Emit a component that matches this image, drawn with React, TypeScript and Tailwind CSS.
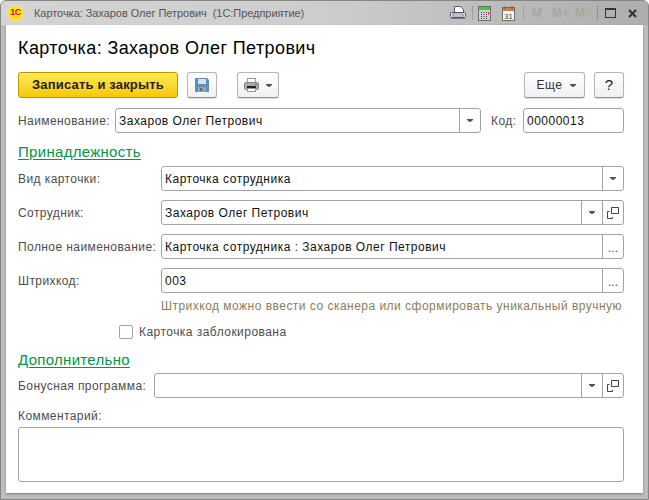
import React from 'react';

const font = { fontFamily: '"Liberation Sans", Arial, sans-serif' };

const Caret = () => (
  <svg width="6" height="3" viewBox="0 0 6 3" className="shrink-0">
    <path d="M0 0h6v1L3.500 3h-1L0 1z" fill="#555" />
  </svg>
);

const CopyIcon = () => (
  <svg width="12" height="12" viewBox="0 0 12 12" fill="none" stroke="#444" strokeWidth="1">
    <path d="M4.500 .5h7v6h-7z" />
    <path d="M2.500 4.500h-2v7h5V10" />
  </svg>
);

const FieldBtn = ({ w, children }: { w: string; children: React.ReactNode }) => (
  <div className={`${w} h-full border-l border-[#a3a3a3] flex items-center justify-center shrink-0`}>{children}</div>
);

const Dots = () => <span className="text-[12px] leading-none text-[#444] mt-[3px]">...</span>;

const Field = ({ value, className, children }: { value?: string; className: string; children?: React.ReactNode }) => (
  <div className={`h-[25px] border border-[#a3a3a3] rounded-[3px] bg-white flex items-stretch ${className}`}>
    <div className="flex-1 min-w-0 px-[3px] flex items-center text-[12px] tracking-[0.5px] text-[#111] whitespace-nowrap">{value}</div>
    {children}
  </div>
);

const Label = ({ children, className }: { children: React.ReactNode; className: string }) => (
  <div className={`text-[12px] tracking-[0.42px] text-[#4d4d4d] whitespace-nowrap shrink-0 ${className}`}>{children}</div>
);

const Row = ({ label, value, children }: { label: string; value?: string; children?: React.ReactNode }) => (
  <div className="flex items-center">
    <Label className="w-[143px]">{label}</Label>
    <Field value={value} className="flex-1">{children}</Field>
  </div>
);

const ToolBtn = ({ className, children }: { className: string; children: React.ReactNode }) => (
  <div className={`h-[26px] rounded-[3px] border border-[#b5b5b5] border-b-[#8f8f8f] bg-gradient-to-b from-white to-[#f1f1f1] shadow-[0_1px_1px_rgba(0,0,0,0.15)] flex items-center justify-center ${className}`}>
    {children}
  </div>
);

const Heading = ({ children }: { children: React.ReactNode }) => (
  <div className="text-[15px] leading-[18px] tracking-[0.3px] text-[#009646] underline underline-offset-2 decoration-[#009646]">{children}</div>
);

export default function App() {
  return (
    <div style={font} className="w-[649px] h-[500px] overflow-hidden flex flex-col bg-[#bdbdbd] border border-[#858585] rounded-t-[6px]">
      {/* title bar */}
      <div className="h-[24px] shrink-0 flex items-center pl-[7px] pr-[11px] bg-gradient-to-r from-[#d4d4d4] via-[#cdcdcd] to-[#adadad]">
        <div className="w-[15px] h-[15px] rounded-full bg-[#ffdf1f] shadow-[0_0_2px_#fff3a0] flex items-center justify-center text-[9px] font-bold tracking-[-0.5px] text-[#d0201a] shrink-0">1С</div>
        <div className="ml-[11px] text-[11px] tracking-[-0.05px] text-[#555] whitespace-pre">Карточка: Захаров Олег Петрович  (1С:Предприятие)</div>
        <div className="ml-auto flex items-center">
          <svg width="16" height="14" viewBox="0 0 16 14" fill="none">
            <path d="M4.500 .5h6l3 3v3h-9z" fill="#fff" stroke="#556" />
            <rect x=".5" y="6.500" width="15" height="5" rx="1" fill="#e4e8ee" stroke="#556" />
            <rect x="3" y="8" width="10" height="2" fill="#fff" stroke="#556" strokeWidth=".7" />
            <path d="M1 12.500h14" stroke="#778" />
          </svg>
          <div className="w-px h-[14px] bg-[#9c9c9c] ml-[6px] mr-[5px]" />
          <svg width="13" height="15" viewBox="0 0 13 15">
            <rect x=".5" y=".5" width="12" height="14" fill="#cfd2d2" stroke="#6d6d6d" />
            <rect x="1" y="1" width="11" height="3" fill="#4fc048" />
            <path d="M3 6h1v1H3zM5.500 6h1v1h-1zM8 6h1v1H8zM3 8h1v1H3zM5.500 8h1v1h-1zM8 8h1v1H8zM3 10h1v1H3zM5.500 10h1v1h-1zM8 10h1v1H8zM3 12h1v1H3zM5.500 12h1v1h-1zM8 12h1v1H8z" fill="#444" />
            <rect x="10" y="6" width="1" height="3" fill="#d33" />
          </svg>
          <svg width="13" height="15" viewBox="0 0 13 15" className="ml-[11px]">
            <rect x=".5" y="1.500" width="12" height="13" fill="#f6f6f6" stroke="#7a6a5a" />
            <rect x="1" y="2" width="11" height="3" fill="#c9824a" />
            <path d="M3 0v3M10 0v3" stroke="#8a5a3a" />
            <text x="6.500" y="12.500" fontSize="7.500" textAnchor="middle" fill="#333">31</text>
          </svg>
          <div className="w-px h-[14px] bg-[#9f9f9f] ml-[8px] mr-[8px]" />
          <div className="flex items-center text-[12px] font-bold text-[#aea49b]">
            <span className="w-[20px]">M</span>
            <span className="w-[23px]">M+</span>
            <span className="w-[21px]">M-</span>
          </div>
          <div className="w-px h-[14px] bg-[#8f8f8f] ml-[1px] mr-[7px]" />
          <div className="w-[11px] h-[10px] border border-[#333] border-t-2 mr-[12px]" />
          <svg width="9" height="9" viewBox="0 0 9 9">
            <path d="M1 1l7 7M8 1L1 8" stroke="#333" strokeWidth="2" />
          </svg>
        </div>
      </div>

      {/* form */}
      <div className="mx-[5px] h-[468px] bg-white pl-[12px] pr-[19px] flex flex-col shadow-[0_1px_2px_rgba(0,0,0,0.35)] shrink-0">
        <div className="mt-[13px] text-[18px] leading-[20px] tracking-[0.4px] text-black whitespace-nowrap">Карточка: Захаров Олег Петрович</div>

        <div className="mt-[14px] flex items-center">
          <div className="w-[160px] h-[26px] rounded-[3px] border border-[#b8960b] bg-gradient-to-b from-[#ffe94a] to-[#f5c800] flex items-center justify-center text-[13px] font-bold tracking-[0.17px] text-[#222]">
            Записать и закрыть
          </div>
          <ToolBtn className="w-[30px] ml-[9px]">
            <svg width="14" height="14" viewBox="0 0 14 14">
              <path d="M0 0h12l2 2v12H0z" fill="#5f8fb8" />
              <rect x="3" y="1" width="8" height="5" fill="#d5e4f2" />
              <rect x="3" y="9" width="8" height="5" fill="#93a3b3" />
              <rect x="5" y="10" width="2" height="3" fill="#3f6f98" />
            </svg>
          </ToolBtn>
          <ToolBtn className="w-[42px] ml-[20px] gap-[7px]">
            <svg width="15" height="14" viewBox="0 0 15 14">
              <rect x="3.500" y=".5" width="8" height="4" fill="#fff" stroke="#999" />
              <rect x=".5" y="4.500" width="14" height="7" rx="1" fill="#b5a8a0" stroke="#888" />
              <rect x="3" y="8" width="9" height="2" fill="#222" />
              <rect x="11" y="6" width="2" height="1" fill="#c0392b" />
              <rect x="3.500" y="10.500" width="8" height="3" fill="#fff" stroke="#999" />
            </svg>
            <Caret />
          </ToolBtn>
          <ToolBtn className="w-[61px] ml-auto gap-[7px] pl-[3px] text-[12px] tracking-[0.6px] text-[#333]">
            Еще
            <Caret />
          </ToolBtn>
          <ToolBtn className="w-[30px] ml-[9px] text-[15px] text-[#222]">?</ToolBtn>
        </div>

        <div className="mt-[10px] flex items-center">
          <Label className="w-[97px]">Наименование:</Label>
          <Field value="Захаров Олег Петрович" className="w-[366px]">
            <FieldBtn w="w-[21px]"><Caret /></FieldBtn>
          </Field>
          <Label className="ml-[10px] w-[32px]">Код:</Label>
          <Field value="00000013" className="w-[101px]" />
        </div>

        <div className="mt-[10px]"><Heading>Принадлежность</Heading></div>

        <div className="mt-[5px] flex flex-col gap-[9px]">
          <Row label="Вид карточки:" value="Карточка сотрудника">
            <FieldBtn w="w-[21px]"><Caret /></FieldBtn>
          </Row>
          <Row label="Сотрудник:" value="Захаров Олег Петрович">
            <FieldBtn w="w-[21px]"><Caret /></FieldBtn>
            <FieldBtn w="w-[21px]"><CopyIcon /></FieldBtn>
          </Row>
          <Row label="Полное наименование:" value="Карточка сотрудника : Захаров Олег Петрович">
            <FieldBtn w="w-[21px]"><Dots /></FieldBtn>
          </Row>
          <Row label="Штрихкод:" value="003">
            <FieldBtn w="w-[21px]"><Dots /></FieldBtn>
          </Row>
        </div>

        <div className="mt-[6px] pl-[143px] text-[12px] leading-[15px] tracking-[0.48px] text-[#8a7d5c] whitespace-nowrap">
          Штрихкод можно ввести со сканера или сформировать уникальный вручную
        </div>

        <div className="mt-[9px] pl-[101px] flex items-center gap-[6px]">
          <div className="w-[14px] h-[14px] border border-[#a3a3a3] rounded-[2px]" />
          <div className="text-[12px] tracking-[0.46px] text-[#4d4d4d]">Карточка заблокирована</div>
        </div>

        <div className="mt-[10px]"><Heading>Дополнительно</Heading></div>

        <div className="mt-[4px] flex items-center">
          <Label className="w-[136px]">Бонусная программа:</Label>
          <Field className="flex-1">
            <FieldBtn w="w-[21px]"><Caret /></FieldBtn>
            <FieldBtn w="w-[21px]"><CopyIcon /></FieldBtn>
          </Field>
        </div>

        <Label className="mt-[9px] w-full">Комментарий:</Label>
        <div className="mt-[2px] h-[55px] border border-[#a3a3a3] rounded-[3px]" />
      </div>
    </div>
  );
}
